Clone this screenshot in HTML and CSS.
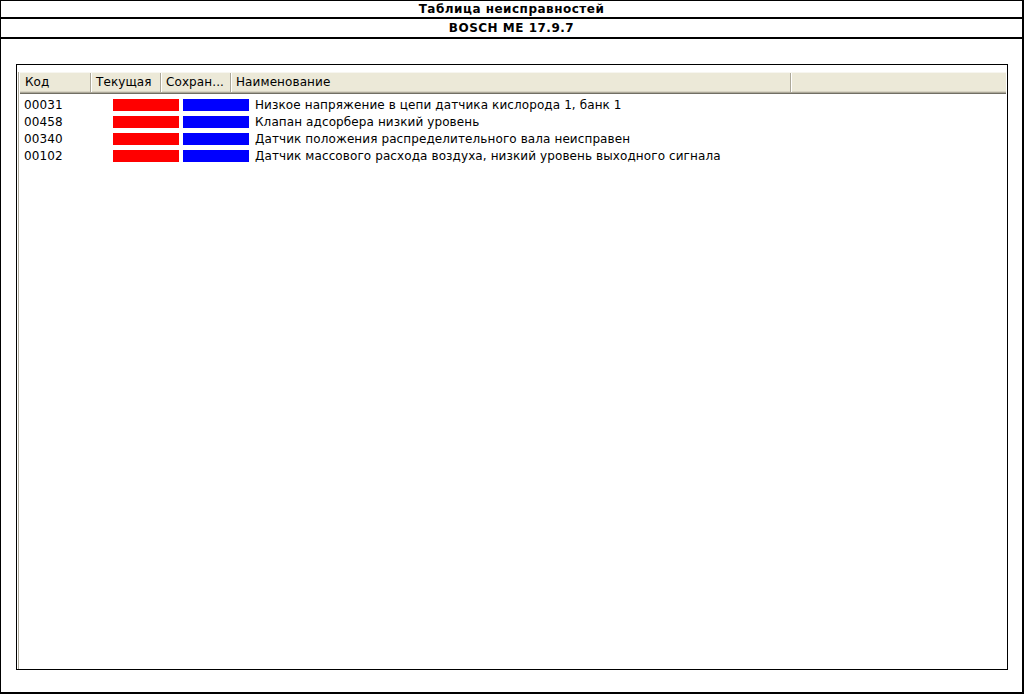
FILE: index.html
```html
<!DOCTYPE html>
<html lang="ru">
<head>
    <meta charset="UTF-8">
    <title>Таблица неисправностей</title>
    <link rel="stylesheet" href="styles.css">
</head>
<body>
    <div class="frame">
        <div class="caption">Таблица неисправностей</div>
        <div class="caption sub">BOSCH ME 17.9.7</div>
        <div class="content">
            <div class="panel">
                <div class="list">
                    <div class="head">
                        <div class="col c-code">Код</div>
                        <div class="col c-cur">Текущая</div>
                        <div class="col c-saved">Сохран...</div>
                        <div class="col c-name">Наименование</div>
                        <div class="col c-rest"></div>
                    </div>
                    <div class="rows">
                        <div class="row">
                            <span class="code">00031</span>
                            <span class="bar red"></span>
                            <span class="bar blue"></span>
                            <span class="name">Низкое напряжение в цепи датчика кислорода 1, банк 1</span>
                        </div>
                        <div class="row">
                            <span class="code">00458</span>
                            <span class="bar red"></span>
                            <span class="bar blue"></span>
                            <span class="name">Клапан адсорбера низкий уровень</span>
                        </div>
                        <div class="row">
                            <span class="code">00340</span>
                            <span class="bar red"></span>
                            <span class="bar blue"></span>
                            <span class="name">Датчик положения распределительного вала неисправен</span>
                        </div>
                        <div class="row">
                            <span class="code">00102</span>
                            <span class="bar red"></span>
                            <span class="bar blue"></span>
                            <span class="name">Датчик массового расхода воздуха, низкий уровень выходного сигнала</span>
                        </div>
                    </div>
                </div>
            </div>
        </div>
    </div>
</body>
</html>
```

FILE: styles.css
```css
html, body {
    margin: 0;
    padding: 0;
    background: #fff;
}
body {
    width: 1024px;
    height: 694px;
    font-family: "DejaVu Sans", sans-serif;
    font-size: 12px;
    letter-spacing: 0.1px;
    color: #000;
}
.frame {
    box-sizing: border-box;
    width: 1024px;
    height: 694px;
    border-top: 1px solid #000;
    border-left: 1px solid #000;
    border-right: 2px solid #000;
    border-bottom: 2px solid #000;
    display: flex;
    flex-direction: column;
}
.caption {
    height: 16px;
    line-height: 16px;
    text-align: center;
    font-family: "DejaVu Sans", sans-serif;
    font-weight: bold;
    font-size: 12px;
    letter-spacing: 0.5px;
    border-bottom: 2px solid #000;
}
.caption.sub {
    height: 18px;
    line-height: 18px;
}
.content {
    flex: 1;
    padding: 25px 14px 22px 15px;
}
.panel {
    box-sizing: border-box;
    width: 992px;
    height: 606px;
    border: 1px solid #000;
    padding: 7px 1px 0 1px;
}
.list {
    box-sizing: border-box;
    height: 100%;
    border-left: 1px solid #aca899;
    padding-left: 1px;
}
.head {
    display: flex;
    height: 22px;
    box-sizing: border-box;
    background: #ece9d8;
    border-top: 1px solid #f7f6f0;
    box-shadow: inset 0 -1px 0 #716f64, inset 0 -2px 0 #aca899, inset 0 -3px 0 #d8d4c4;
}
.col {
    box-sizing: border-box;
    height: 19px;
    line-height: 18px;
    padding-left: 5px;
    border-right: 1px solid #aca899;
    box-shadow: 1px 0 0 #fff;
    white-space: nowrap;
}
.c-code { width: 71px; }
.c-cur { width: 70px; }
.c-saved { width: 70px; }
.c-name { width: 560px; }
.c-rest { flex: 1; border-right: none; box-shadow: none; }
.rows {
    padding-top: 2px;
}
.row {
    display: flex;
    align-items: center;
    height: 17px;
}
.code {
    width: 89px;
    padding-left: 4px;
}
.bar {
    width: 66px;
    height: 12px;
}
.bar.red {
    background: #ff0000;
    margin-right: 4px;
}
.bar.blue {
    background: #0000ff;
    margin-right: 6px;
}
.name {
    white-space: nowrap;
}
```
